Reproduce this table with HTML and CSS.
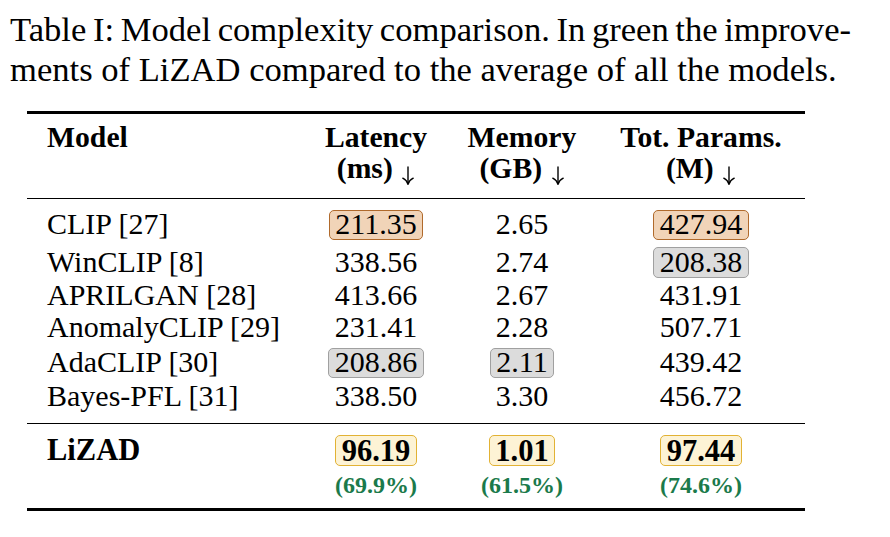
FILE: index.html
```html
<!DOCTYPE html>
<html lang="en">
<head>
<meta charset="utf-8">
<title>Table I: Model complexity comparison</title>
<link rel="stylesheet" href="styles.css">
</head>
<body>
<div class="caption">
  <div class="cap-line first">Table I: Model complexity comparison. In green the improve-</div>
  <div class="cap-line">ments of LiZAD compared to the average of all the models.</div>
</div>

<div class="tbl">
  <div class="r head">
    <div class="c model">Model</div>
    <div class="c num">Latency<br>(ms) <svg class="arrow" viewBox="0 0 14 19" width="14" height="19" aria-label="lower is better"><path d="M7 1 V17.5" /><path d="M1.8 12.2 C4.6 13.6 6.3 15.6 7 18.2 C7.7 15.6 9.4 13.6 12.2 12.2" /></svg></div>
    <div class="c num">Memory<br>(GB) <svg class="arrow" viewBox="0 0 14 19" width="14" height="19" aria-label="lower is better"><path d="M7 1 V17.5" /><path d="M1.8 12.2 C4.6 13.6 6.3 15.6 7 18.2 C7.7 15.6 9.4 13.6 12.2 12.2" /></svg></div>
    <div class="c num">Tot. Params.<br>(M) <svg class="arrow" viewBox="0 0 14 19" width="14" height="19" aria-label="lower is better"><path d="M7 1 V17.5" /><path d="M1.8 12.2 C4.6 13.6 6.3 15.6 7 18.2 C7.7 15.6 9.4 13.6 12.2 12.2" /></svg></div>
  </div>

  <div class="body">
    <div class="r row boxed">
      <div class="c model">CLIP [27]</div>
      <div class="c num"><span class="hl orange">211.35</span></div>
      <div class="c num">2.65</div>
      <div class="c num"><span class="hl orange">427.94</span></div>
    </div>
    <div class="r row boxed">
      <div class="c model">WinCLIP [8]</div>
      <div class="c num">338.56</div>
      <div class="c num">2.74</div>
      <div class="c num"><span class="hl gray">208.38</span></div>
    </div>
    <div class="r row">
      <div class="c model">APRILGAN [28]</div>
      <div class="c num">413.66</div>
      <div class="c num">2.67</div>
      <div class="c num">431.91</div>
    </div>
    <div class="r row">
      <div class="c model">AnomalyCLIP [29]</div>
      <div class="c num">231.41</div>
      <div class="c num">2.28</div>
      <div class="c num">507.71</div>
    </div>
    <div class="r row boxed">
      <div class="c model">AdaCLIP [30]</div>
      <div class="c num"><span class="hl gray">208.86</span></div>
      <div class="c num"><span class="hl gray">2.11</span></div>
      <div class="c num">439.42</div>
    </div>
    <div class="r row">
      <div class="c model">Bayes-PFL [31]</div>
      <div class="c num">338.50</div>
      <div class="c num">3.30</div>
      <div class="c num">456.72</div>
    </div>
  </div>

  <div class="foot">
    <div class="r row best">
      <div class="c model">LiZAD</div>
      <div class="c num"><span class="hl yellow">96.19</span></div>
      <div class="c num"><span class="hl yellow">1.01</span></div>
      <div class="c num"><span class="hl yellow">97.44</span></div>
    </div>
    <div class="r pct">
      <div class="c model"></div>
      <div class="c num">(69.9%)</div>
      <div class="c num">(61.5%)</div>
      <div class="c num">(74.6%)</div>
    </div>
  </div>
</div>
</body>
</html>
```

FILE: styles.css
```css
html, body {
  margin: 0;
  padding: 0;
  background: #ffffff;
}

body {
  font-family: "Liberation Serif", "Times New Roman", serif;
  color: #000000;
  width: 890px;
  height: 537px;
  overflow: hidden;
}

.caption {
  margin: 9px 0 0 10px;
  width: 841px;
  font-size: 34.6px;
  line-height: 40px;
}

.cap-line {
  white-space: nowrap;
}

.cap-line.first {
  text-align: justify;
  text-align-last: justify;
  word-spacing: -5px;
}

.tbl {
  margin: 22px 0 0 27px;
  width: 778px;
  border-top: 3px solid #000;
  border-bottom: 3px solid #000;
  font-size: 30px;
}

.r {
  display: grid;
  grid-template-columns: 289px 120px 172px 186px;
}

.c.model {
  padding-left: 20px;
  white-space: nowrap;
}

.c.num {
  text-align: center;
  white-space: nowrap;
}

.head {
  font-size: 29.7px;
  font-weight: bold;
  line-height: 31px;
  padding: 7.7px 0 13.3px;
  border-bottom: 1.6px solid #000;
}

.arrow {
  display: inline-block;
  vertical-align: -7px;
  margin-left: 1px;
  fill: none;
  stroke: #000;
  stroke-width: 1.4;
  stroke-linecap: round;
  stroke-linejoin: round;
}

.body {
  padding: 5.2px 0 12.3px;
  border-bottom: 1.6px solid #000;
}

.row {
  height: 31.5px;
  line-height: 31.5px;
}

.row.boxed {
  padding: 4px 0 2px;
}

.hl {
  display: inline-block;
  vertical-align: baseline;
  line-height: 26px;
  padding: 0.4px 5.5px 1.9px;
  border: 1.3px solid;
  border-radius: 5px;
}

.hl.orange {
  background: #f1d4b8;
  border-color: #b06a2c;
}

.hl.gray {
  background: #dcdcdc;
  border-color: #a0a0a0;
}

.hl.yellow {
  background: #fdf3d5;
  border-color: #e2b234;
  padding: 2px 5.5px 1.3px;
}

.foot {
  padding: 10.5px 0 9.8px;
}

.best {
  font-size: 30.5px;
  font-weight: bold;
}

.pct {
  margin-top: 5.5px;
  font-size: 24px;
  line-height: 26px;
  font-weight: bold;
  color: #1b7a4b;
}
```
